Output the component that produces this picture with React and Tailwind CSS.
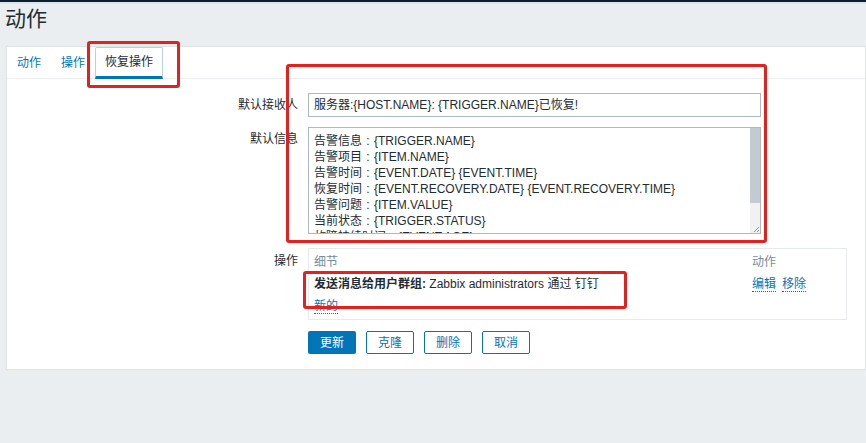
import React from 'react';

const messageLines = [
  ['告警信息', '{TRIGGER.NAME}'],
  ['告警项目', '{ITEM.NAME}'],
  ['告警时间', '{EVENT.DATE} {EVENT.TIME}'],
  ['恢复时间', '{EVENT.RECOVERY.DATE} {EVENT.RECOVERY.TIME}'],
  ['告警问题', '{ITEM.VALUE}'],
  ['当前状态', '{TRIGGER.STATUS}'],
  ['故障持续时间', '{EVENT.AGE}'],
];

const tabs = [
  { label: '动作', active: false },
  { label: '操作', active: false },
  { label: '恢复操作', active: true },
];

const buttons = [
  { label: '更新', primary: true },
  { label: '克隆' },
  { label: '删除' },
  { label: '取消' },
];

const FormRow = ({ label, children, labelClass = '' }) => (
  <div className="flex gap-[10px]">
    <div className={`w-[291px] shrink-0 text-right ${labelClass}`}>{label}</div>
    <div>{children}</div>
  </div>
);

export default function App() {
  return (
    <div className="relative h-[443px] w-[866px] overflow-hidden bg-[#ebeef0] font-['Liberation_Sans','Noto_Sans_CJK_SC',sans-serif] text-[12px] text-[#1f2c33]">
      <div className="h-[2px] bg-[#0d1e2e]" />
      <div className="h-[2px] bg-[#dce6ee]" />

      {/* Page title */}
      <h1 className="pl-[5px] pt-[3px] text-[21px] leading-[24px]">动作</h1>

      {/* Panel */}
      <div className="ml-[6px] mt-[15px] h-[324px] border border-[#dfe4e7] bg-white">
        {/* Tabs */}
        <div className="flex h-[32px] border-b border-[#ebeef0]">
          {tabs.map((tab) =>
            tab.active ? (
              <div
                key={tab.label}
                className="flex h-[32px] items-center rounded-t-[2px] border border-[#b8d0e6] border-b-[3px] border-b-[#0275b8] px-[9px]"
              >
                {tab.label}
              </div>
            ) : (
              <div key={tab.label} className="flex h-[32px] items-center px-[10px] text-[#0275b8]">
                {tab.label}
              </div>
            )
          )}
        </div>

        {/* Form */}
        <div className="flex flex-col pt-[14px]">
          <FormRow label="默认接收人" labelClass="leading-[24px]">
            <div className="flex h-[24px] w-[453px] items-center border border-[#acbbc2] px-[5px]">
              服务器:{'{'}HOST.NAME{'}'}: {'{'}TRIGGER.NAME{'}'}已恢复!
            </div>
          </FormRow>

          <div className="mt-[10px]">
            <FormRow label="默认信息" labelClass="pt-[4px] leading-[16px]">
              <div className="flex h-[107px] w-[453px] border border-[#acbbc2]">
                <div className="flex-1 overflow-hidden pl-[5px] pt-[5px] leading-[16px]">
                  {messageLines.map(([name, macro]) => (
                    <div key={name} className="whitespace-nowrap">
                      {name}
                      <span className="inline-block w-[12px] text-center">:</span>
                      {macro}
                    </div>
                  ))}
                </div>
                <div className="flex w-[10px] flex-col bg-[#f1f1f1]">
                  <div className="h-[75px] bg-[#c3cbd0]" />
                  <div className="flex-1" />
                  <div className="flex h-[10px] items-end justify-end">
                    <svg width="8" height="8" viewBox="0 0 8 8">
                      <path d="M7 2 L2 7 M7 5 L5 7" stroke="#8a9399" strokeWidth="1" />
                    </svg>
                  </div>
                </div>
              </div>
            </FormRow>
          </div>

          <div className="mt-[14px]">
            <FormRow label="操作" labelClass="pt-[5px] leading-[16px]">
              <div className="flex h-[72px] w-[539px] flex-col border border-[#e6eaec] px-[5px] pt-[5px]">
                <div className="flex h-[15px] items-center text-[#768d99]">
                  <div className="w-[438px]">细节</div>
                  <div>动作</div>
                </div>
                <div className="mt-[7px] flex h-[16px] items-center">
                  <div className="w-[438px]">
                    <span className="font-bold">发送消息给用户群组:</span> Zabbix administrators 通过 钉钉
                  </div>
                  <div className="flex gap-[6px] text-[#0275b8]">
                    <span className="border-b border-dotted border-[#0275b8] leading-[14px]">编辑</span>
                    <span className="border-b border-dotted border-[#0275b8] leading-[14px]">移除</span>
                  </div>
                </div>
                <div className="mt-[6px] flex h-[16px] items-center">
                  <span className="border-b border-dotted border-[#0275b8] leading-[14px] text-[#0275b8]">新的</span>
                </div>
              </div>
            </FormRow>
          </div>

          <div className="mt-[11px] flex gap-[10px] pl-[301px]">
            {buttons.map((b) =>
              b.primary ? (
                <button
                  key={b.label}
                  className="flex h-[23px] w-[48px] items-center justify-center rounded-[2px] bg-[#0275b8] text-white"
                >
                  {b.label}
                </button>
              ) : (
                <button
                  key={b.label}
                  className="flex h-[23px] w-[48px] items-center justify-center rounded-[2px] border border-[#0275b8] bg-white text-[#0275b8]"
                >
                  {b.label}
                </button>
              )
            )}
          </div>
        </div>
      </div>

      {/* Red annotation boxes */}
      <div className="absolute left-[87px] top-[41px] h-[47px] w-[93px] rounded-[3px] border-[3px] border-[#e3211f]" />
      <div className="absolute left-[286px] top-[64px] h-[179px] w-[481px] rounded-[3px] border-[3px] border-[#e3211f]" />
      <div className="absolute left-[303px] top-[271px] h-[38px] w-[324px] rounded-[3px] border-[3px] border-[#e3211f]" />
    </div>
  );
}
